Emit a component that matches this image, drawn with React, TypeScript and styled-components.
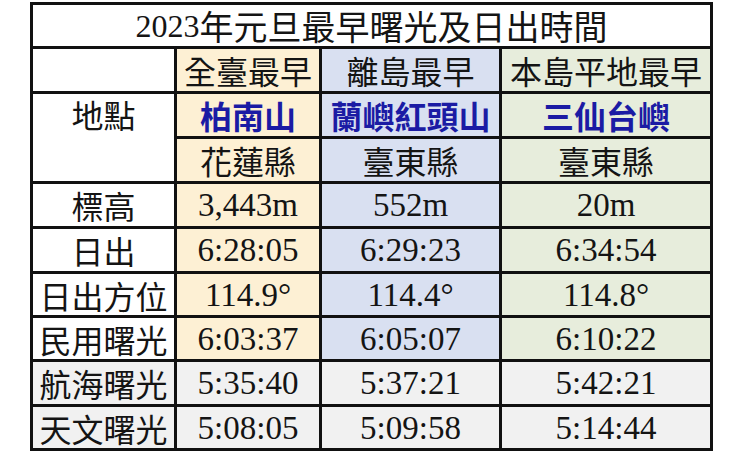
import styled, { createGlobalStyle } from "styled-components";

const GlobalStyle = createGlobalStyle`
  html, body {
    margin: 0;
    padding: 0;
    background: #ffffff;
  }
`;

type Tone = "white" | "yellow" | "blue" | "green" | "gray";

const tones: Record<Tone, string> = {
  white: "#ffffff",
  yellow: "#fdf0d4",
  blue: "#d9e0f1",
  green: "#e7eddc",
  gray: "#f1f1f1",
};

interface Place {
  tone: Tone;
  group: string;
  name: string;
  county: string;
  height: string;
  sunrise: string;
  azimuth: string;
  civil: string;
  nautical: string;
  astro: string;
}

const places: Place[] = [
  {
    tone: "yellow",
    group: "全臺最早",
    name: "柏南山",
    county: "花蓮縣",
    height: "3,443m",
    sunrise: "6:28:05",
    azimuth: "114.9°",
    civil: "6:03:37",
    nautical: "5:35:40",
    astro: "5:08:05",
  },
  {
    tone: "blue",
    group: "離島最早",
    name: "蘭嶼紅頭山",
    county: "臺東縣",
    height: "552m",
    sunrise: "6:29:23",
    azimuth: "114.4°",
    civil: "6:05:07",
    nautical: "5:37:21",
    astro: "5:09:58",
  },
  {
    tone: "green",
    group: "本島平地最早",
    name: "三仙台嶼",
    county: "臺東縣",
    height: "20m",
    sunrise: "6:34:54",
    azimuth: "114.8°",
    civil: "6:10:22",
    nautical: "5:42:21",
    astro: "5:14:44",
  },
];

// rows below the header block: label, field, gray band?
const dataRows: { label: string; key: keyof Place; gray?: boolean }[] = [
  { label: "標高", key: "height" },
  { label: "日出", key: "sunrise" },
  { label: "日出方位", key: "azimuth" },
  { label: "民用曙光", key: "civil" },
  { label: "航海曙光", key: "nautical", gray: true },
  { label: "天文曙光", key: "astro", gray: true },
];

const App = () => {
  return (
    <>
      <GlobalStyle />
      <Page>
        <Sheet>
          <Title>
            2023<Cjk>年元旦最早曙光及日出時間</Cjk>
          </Title>

          <LabelCell $tone="white" />
          {places.map((p) => (
            <TextCell key={p.group} $tone={p.tone}>{p.group}</TextCell>
          ))}

          <LocationLabel $tone="white">地點</LocationLabel>
          {places.map((p) => (
            <NameCell key={p.name} $tone={p.tone}>{p.name}</NameCell>
          ))}
          {places.map((p, i) => (
            <TextCell key={p.county + i} $tone={p.tone}>{p.county}</TextCell>
          ))}

          {dataRows.map((row) => (
            <Row key={row.label}>
              <LabelCell $tone={row.gray ? "gray" : "white"}>{row.label}</LabelCell>
              {places.map((p) => (
                <NumberCell key={p.name} $tone={row.gray ? "gray" : p.tone}>
                  {p[row.key]}
                </NumberCell>
              ))}
            </Row>
          ))}
        </Sheet>
      </Page>
    </>
  );
};

const Row = styled.div`
  display: contents;
`;

const Page = styled.div`
  width: 750px;
  height: 454px;
  padding: 2px 0 0 30px;
  box-sizing: border-box;
`;

const Sheet = styled.div`
  display: grid;
  width: 683px;
  box-sizing: border-box;
  grid-template-columns: 141px 142px 177px 208px;
  grid-template-rows: 41px 42px 42px 42px 42px 42px 41px 41px 42px 41px;
  gap: 3px;
  padding: 3px;
  background: #111111;
`;

const Cell = styled.div<{ $tone: Tone }>`
  display: flex;
  align-items: center;
  justify-content: center;
  background: ${(props) => tones[props.$tone]};
  color: #141414;
  white-space: nowrap;
  line-height: 1;
`;

const Title = styled(Cell).attrs({ $tone: "white" as Tone })`
  grid-column: 1 / span 4;
  font-family: "Liberation Serif", "Noto Sans CJK TC", serif;
  font-size: 32px;
  padding-top: 1px;
`;

const Cjk = styled.span`
  font-family: "Noto Sans CJK TC", sans-serif;
  font-size: 34px;
`;

const TextCell = styled(Cell)`
  font-family: "Noto Sans CJK TC", sans-serif;
  font-size: 32px;
`;

const LabelCell = styled(TextCell)``;

const LocationLabel = styled(TextCell)`
  grid-row: span 2;
  align-items: flex-start;
  padding-top: 4px;
`;

const NameCell = styled(TextCell)`
  color: #1b1ba4;
  font-weight: 700;
`;

const NumberCell = styled(Cell)`
  font-family: "Liberation Serif", serif;
  font-size: 33px;
  padding-top: 1px;
`;

export default App;
